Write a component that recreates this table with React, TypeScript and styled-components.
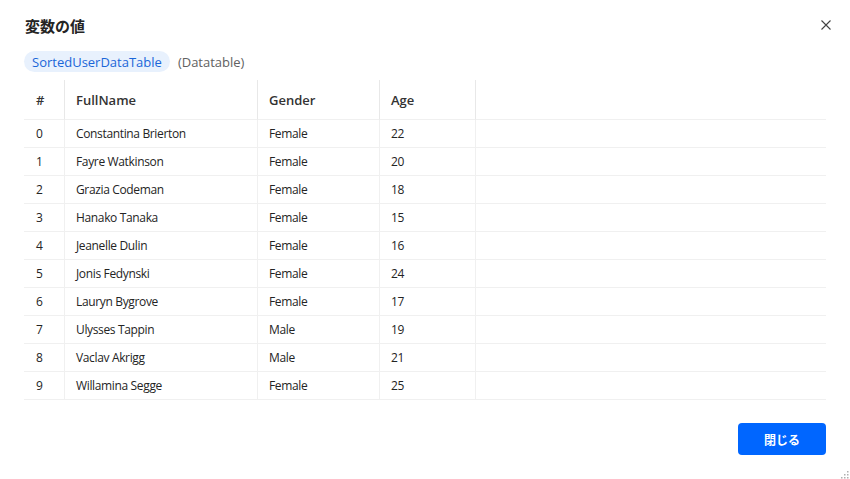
import React from "react";
import styled, { createGlobalStyle } from "styled-components";

const GlobalStyle = createGlobalStyle`
  html, body { margin: 0; padding: 0; background: #ffffff; }
  body {
    font-family: "Open Sans", "Noto Sans CJK JP", sans-serif;
    color: #242424;
  }
  * { box-sizing: border-box; }
`;

const Dialog = styled.div`
  position: relative;
  width: 850px;
  height: 479px;
  padding: 14px 24px 24px 24px;
  display: flex;
  flex-direction: column;
`;

const TitleRow = styled.div`
  display: flex;
  align-items: center;
  justify-content: space-between;
  height: 22px;
`;

const Title = styled.h1`
  margin: 0;
  font-family: "Noto Sans CJK JP", sans-serif;
  font-size: 15px;
  font-weight: 700;
  color: #242424;
  padding-left: 1px;
`;

const CloseButton = styled.button`
  width: 16px;
  height: 16px;
  padding: 0;
  border: none;
  background: transparent;
  display: flex;
  align-items: center;
  justify-content: center;
  margin-right: -8px;
  cursor: pointer;
`;

const VarRow = styled.div`
  display: flex;
  align-items: center;
  gap: 8px;
  margin-top: 15px;
  height: 21px;
`;

const Chip = styled.span`
  display: inline-flex;
  align-items: center;
  height: 21px;
  padding: 0 8px;
  border-radius: 11px;
  background: #e8f1fd;
  color: #1a66d9;
  font-size: 13px;
`;

const TypeLabel = styled.span`
  color: #616161;
  font-size: 13px;
`;

const Table = styled.div`
  margin-top: 8px;
  display: grid;
  grid-template-columns: 40px 193px 122px 96px 1fr;
`;

const HeadCell = styled.div<{ $first?: boolean }>`
  height: 40px;
  display: flex;
  align-items: center;
  padding-left: ${(p) => (p.$first ? "12px" : "11px")};
  font-size: 13px;
  font-weight: 600;
  color: #333333;
  border-bottom: 1px solid #f0f0f0;
  border-left: ${(p) => (p.$first ? "none" : "1px solid #e8e8e8")};
`;

const Cell = styled.div<{ $first?: boolean }>`
  height: 28px;
  display: flex;
  align-items: center;
  padding-left: ${(p) => (p.$first ? "12px" : "11px")};
  font-size: 12px;
  letter-spacing: -0.35px;
  color: #242424;
  border-bottom: 1px solid #f0f0f0;
  border-left: ${(p) => (p.$first ? "none" : "1px solid #f0f0f0")};
  white-space: nowrap;
`;

const Footer = styled.div`
  margin-top: auto;
  display: flex;
  justify-content: flex-end;
`;

const PrimaryButton = styled.button`
  width: 88px;
  height: 32px;
  border: none;
  border-radius: 4px;
  background: #0066ff;
  color: #ffffff;
  font-family: "Noto Sans CJK JP", sans-serif;
  font-size: 12px;
  font-weight: 700;
  cursor: pointer;
`;

const Grip = styled.div`
  position: absolute;
  right: 1px;
  bottom: 1px;
  width: 12px;
  height: 12px;
`;

const rows: [string, string, string][] = [
  ["Constantina Brierton", "Female", "22"],
  ["Fayre Watkinson", "Female", "20"],
  ["Grazia Codeman", "Female", "18"],
  ["Hanako Tanaka", "Female", "15"],
  ["Jeanelle Dulin", "Female", "16"],
  ["Jonis Fedynski", "Female", "24"],
  ["Lauryn Bygrove", "Female", "17"],
  ["Ulysses Tappin", "Male", "19"],
  ["Vaclav Akrigg", "Male", "21"],
  ["Willamina Segge", "Female", "25"],
];

const gripDots: [number, number][] = [
  [10, 0],
  [7, 3], [10, 3],
  [4, 6], [7, 6], [10, 6],
  [1, 9], [4, 9], [7, 9], [10, 9],
];

export default function App() {
  return (
    <>
      <GlobalStyle />
      <Dialog>
        <TitleRow>
          <Title>変数の値</Title>
          <CloseButton aria-label="close">
            <svg width="10" height="10" viewBox="0 0 10 10">
              <path d="M0.5 0.5 L9.5 9.5 M9.5 0.5 L0.5 9.5" stroke="#424242" strokeWidth="1.1" />
            </svg>
          </CloseButton>
        </TitleRow>
        <VarRow>
          <Chip>SortedUserDataTable</Chip>
          <TypeLabel>(Datatable)</TypeLabel>
        </VarRow>
        <Table>
          <HeadCell $first>#</HeadCell>
          <HeadCell>FullName</HeadCell>
          <HeadCell>Gender</HeadCell>
          <HeadCell>Age</HeadCell>
          <HeadCell />
          {rows.map((r, i) => (
            <React.Fragment key={i}>
              <Cell $first>{i}</Cell>
              <Cell>{r[0]}</Cell>
              <Cell>{r[1]}</Cell>
              <Cell>{r[2]}</Cell>
              <Cell />
            </React.Fragment>
          ))}
        </Table>
        <Footer>
          <PrimaryButton>閉じる</PrimaryButton>
        </Footer>
        <Grip>
          <svg width="12" height="12" viewBox="0 0 12 12">
            {gripDots.map(([x, y], k) => (
              <rect key={k} x={x} y={y} width="1.5" height="1.5" fill="#b0b0b0" />
            ))}
          </svg>
        </Grip>
      </Dialog>
    </>
  );
}
